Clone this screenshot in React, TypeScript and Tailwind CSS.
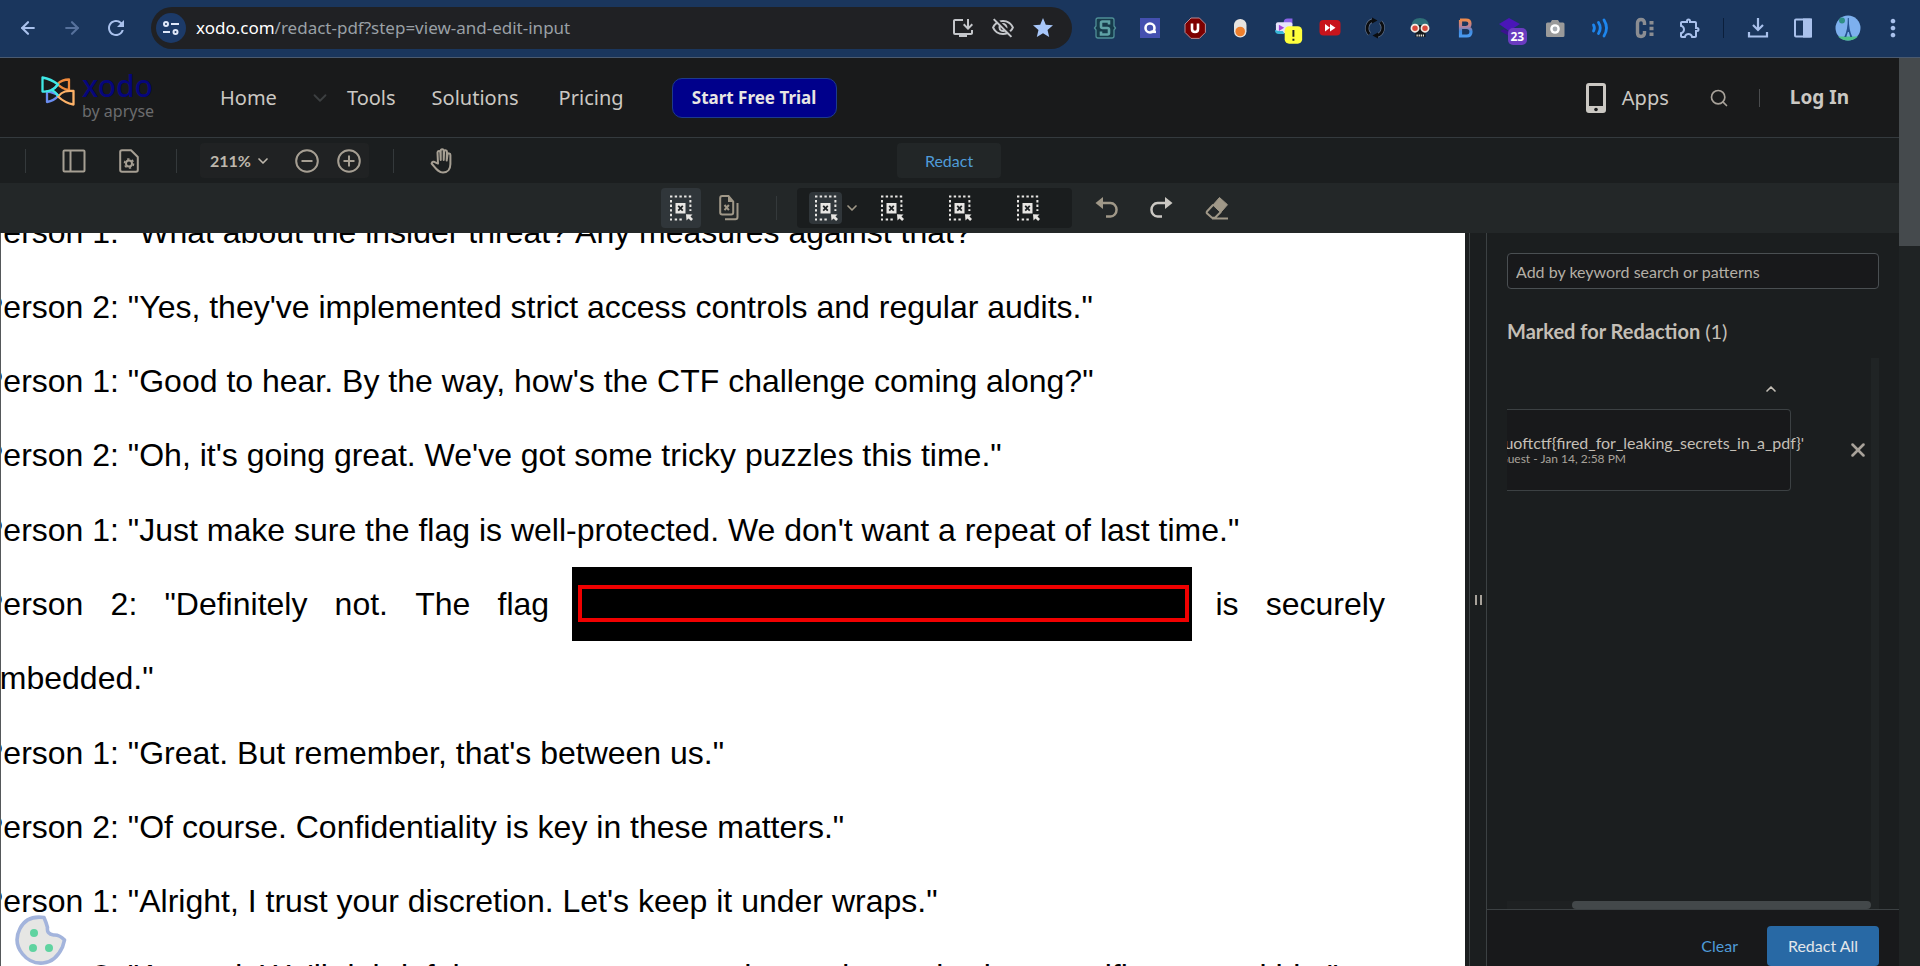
import React from "react";
import {
  ArrowLeft,
  ArrowRight,
  ChevronDown,
  ChevronUp,
  Search,
  X,
} from "lucide-react";
import {
  MdOutlineInstallDesktop,
  MdOutlineVisibilityOff,
  MdStar,
  MdRefresh,
  MdOutlineExtension,
  MdMoreVert,
} from "react-icons/md";

type IconProps = { className?: string };

function RedactAreaIcon({ className = "" }: IconProps) {
  return (
    <svg viewBox="0 0 24 26" className={`h-[26px] w-6 ${className}`} fill="none" aria-hidden="true">
      <path d="M1 1.5H22.4" stroke="currentColor" strokeWidth="2" strokeDasharray="2.4 2.3" />
      <path d="M2 5V25.4" stroke="currentColor" strokeWidth="2" strokeDasharray="2.4 2.2" />
      <path d="M21.4 5V16" stroke="currentColor" strokeWidth="2" strokeDasharray="2.4 2.2" />
      <path d="M5.7 24.4H14" stroke="currentColor" strokeWidth="2" strokeDasharray="2.4 2.3" />
      <rect x="6.5" y="8" width="10" height="10.5" fill="currentColor" />
      <path d="M9.2 10.8l4.6 4.9M13.8 10.8L9.2 15.7" stroke="#1f2325" strokeWidth="1.8" />
      <path d="M17 19.2l6.5.3-2 2 2.5 2.6-1.9 1.9-2.6-2.6-2 2z" fill="currentColor" />
    </svg>
  );
}

function RedactPageIcon() {
  return (
    <svg viewBox="0 0 20 26" className="h-[26px] w-5" fill="none" stroke="currentColor" strokeWidth="2" aria-hidden="true">
      <path d="M9.5 1H3.2Q1.2 1 1.2 3v14.5q0 2 2 2h9q2 0 2-2V6.5z" />
      <path d="M9 1l5.5 6H9z" fill="currentColor" stroke="none" />
      <path d="M5.5 10l4.4 5.2M9.9 10l-4.4 5.2" />
      <path d="M18.5 8v14q0 2.2-2.2 2.2H6" />
    </svg>
  );
}

function UndoIcon({ className = "" }: IconProps) {
  return (
    <svg viewBox="0 0 24 24" className={`h-6 w-6 ${className}`} fill="none" aria-hidden="true">
      <path d="M6 7h9.5a6 6.7 0 0 1 0 13.5H11" stroke="currentColor" strokeWidth="2.5" />
      <path d="M8 1v12L.5 7z" fill="currentColor" />
    </svg>
  );
}

function EraserIcon() {
  return (
    <svg viewBox="0 0 24 24" className="h-6 w-6" fill="none" aria-hidden="true">
      <path d="M14.5 1.5l8 7.2-6.8 7.8-7.8-7.4z" fill="currentColor" stroke="currentColor" strokeLinejoin="round" />
      <path d="M8.2 8.7l-6 6.5q-1 1.2 0 2.3l4.8 4.3h3l6-6M7 22.5H23" stroke="currentColor" strokeWidth="2" />
    </svg>
  );
}

function PanelIcon() {
  return (
    <svg viewBox="0 0 24 24" className="h-6 w-6" fill="none" stroke="currentColor" strokeWidth="2" aria-hidden="true">
      <rect x="1.5" y="1.5" width="21" height="21" rx="1" />
      <path d="M8.5 1.5v21" />
    </svg>
  );
}

function FileGearIcon() {
  return (
    <svg viewBox="0 0 20 24" className="h-6 w-5" fill="none" stroke="currentColor" strokeWidth="2" aria-hidden="true">
      <path d="M12 1.2H3q-1.8 0-1.8 1.8v18q0 1.8 1.8 1.8h14q1.8 0 1.8-1.8V8z" strokeLinejoin="round" />
      <circle cx="10" cy="14.5" r="3" />
      <circle cx="10" cy="14.5" r="4.6" strokeWidth="1.5" strokeDasharray="2.4 2.4" />
    </svg>
  );
}

function ZoomIcon({ plus = false }: { plus?: boolean }) {
  return (
    <svg viewBox="0 0 24 24" className="h-6 w-6" fill="none" stroke="currentColor" strokeWidth="2" aria-hidden="true">
      <circle cx="12" cy="12" r="10.8" />
      <path d="M6.5 12h11" />
      {plus && <path d="M12 6.5v11" />}
    </svg>
  );
}

function HandIcon() {
  return (
    <svg viewBox="0 0 24 26" className="h-[26px] w-6" fill="none" stroke="currentColor" strokeWidth="2" strokeLinecap="round" strokeLinejoin="round" aria-hidden="true">
      <path d="M8 15.5L7.5 4.5c0-2 2.6-2 2.8-.2l.4 7.7V2.8c0-2 3-2 3 0V12l.4-8.6c.2-1.8 2.8-1.6 2.8.2L16.7 12.5l.8-6c.4-1.7 3-1.4 2.9.4V16c0 5-2.6 8.5-7.4 8.5-5 0-7-4-11.4-9 .5-1.9 2.4-2.2 3.6-1.2z" />
    </svg>
  );
}

function XodoMark() {
  return (
    <svg viewBox="0 0 34 30" className="h-[30px] w-[34px]" fill="none" strokeWidth="2.3" strokeLinejoin="round" aria-hidden="true">
      <path d="M6 15.5V26q7-1 11.5-6.5Q14 16.5 6 15.5z" stroke="#6a8df0" />
      <path d="M28 3.5V14q-7-1-11.5-6Q21 3.500 28 3.500z" stroke="#f08a3c" />
      <path d="M10.5 14q4-2 6.5-6" stroke="#6a8df0" />
      <path d="M1.5 1.5v14q5 .5 9-1.5t6.5-5.500Q10 3 1.500 1.500z" stroke="#3fe8e6" />
      <path d="M32.5 15v13.5Q24 27 17 20.5q3.5-4 7-5t8.500-.5z" stroke="#fdb268" />
      <path d="M10.5 14q4 1.5 6.500 6" stroke="#3fe8e6" />
    </svg>
  );
}

const extClass = "h-6 w-7";

const extensions: { name: string; icon: React.ReactNode }[] = [
  {
    name: "Snippets",
    icon: (
      <svg viewBox="0 0 28 24" className={extClass}>
        <path d="M7 2h14q2 0 2 2v6l1.500 2-1.500 2v6q0 2-2 2H7q-2 0-2-2v-6l-1.500-2L5 10V4q0-2 2-2z" fill="#173b4b" stroke="#4f8f96" strokeWidth="1.3" />
        <path d="M18 8.500V5.500h-6.500q-1.500 0-1.500 1.500v3.500q0 1.500 1.500 1.500h5q1.500 0 1.500 1.500V17q0 1.500-1.500 1.500H10v-3" stroke="#5fa3a6" strokeWidth="2.6" fill="none" />
      </svg>
    ),
  },
  {
    name: "Quick search",
    icon: (
      <svg viewBox="0 0 28 24" className={extClass}>
        <rect x="4" y="2" width="20" height="20" fill="#4450b0" />
        <circle cx="14" cy="12" r="4.5" fill="none" stroke="#fff" strokeWidth="2.6" />
        <path d="M14.500 15.800h5.500" stroke="#fff" strokeWidth="2.6" />
      </svg>
    ),
  },
  {
    name: "Content blocker",
    icon: (
      <svg viewBox="0 0 28 24" className={extClass}>
        <path d="M10 2h8.400l6 6v8.400l-6 6H10l-6-6V8z" fill="#7d0000" stroke="#b98a92" strokeWidth="1" />
        <path d="M11 7.500v5.500q0 3 3 3t3-3V7.500" fill="none" stroke="#fff" strokeWidth="2.6" />
      </svg>
    ),
  },
  {
    name: "Toggle",
    icon: (
      <svg viewBox="0 0 28 24" className={extClass}>
        <rect x="8" y="3" width="12.5" height="18.5" rx="6.2" fill="#e8e4e0" />
        <circle cx="14.2" cy="15.5" r="4.8" fill="#ee7f2c" />
      </svg>
    ),
  },
  {
    name: "Stream tools",
    icon: (
      <svg viewBox="0 0 34 34" className="-mb-2 ml-3 h-[34px] w-[34px]">
        <path d="M10 7q0-4 4-4h5v6h-9z" fill="#8a63e8" />
        <rect x="2" y="7" width="17" height="11" rx="2" fill="#e7e4fb" />
        <path d="M1 15q0 4 4 4h6l-2-3H5z" fill="#38b6d8" />
        <path d="M5 9.500l5.500 3-5.500 3.500z" fill="#a442d8" />
        <rect x="11" y="11" width="18" height="18" rx="4.5" fill="#ffff3c" />
        <path d="M20 15v7M20 24v2" stroke="#222" strokeWidth="2" />
      </svg>
    ),
  },
  {
    name: "Speed control",
    icon: (
      <svg viewBox="0 0 28 24" className={extClass}>
        <rect x="3.5" y="4" width="21" height="15.5" rx="4" fill="#c8141c" />
        <path d="M9 8l5 3.700-5 3.700zM14 8l5.500 3.700-5.500 3.700z" fill="#fff" />
      </svg>
    ),
  },
  {
    name: "Sync",
    icon: (
      <svg viewBox="0 0 28 24" className={extClass} fill="none">
        <path d="M16.500 19.500a7.500 8 0 0 0 3-13.500M11.500 4.500a7.500 8 0 0 0-3 13.500" stroke="#66758c" strokeWidth="4" />
        <path d="M16.500 19.500a7.500 8 0 0 0 3-13.500M11.500 4.500a7.500 8 0 0 0-3 13.500" stroke="#0b0d10" strokeWidth="2.8" />
        <path d="M11 1.500l5.500 3-5.500 3zM17 16.500l-5.500 3 5.500 3z" fill="#0b0d10" />
      </svg>
    ),
  },
  {
    name: "Skull",
    icon: (
      <svg viewBox="0 0 28 24" className={extClass}>
        <path d="M6 9q1-6.500 8-6.500T22.500 9l1 6-4 1v5h-10v-5l-5-1z" fill="#15191c" />
        <path d="M5.500 9q1-7 8.500-7t9 7z" fill="#2e6f78" />
        <circle cx="9" cy="12.2" r="3.6" fill="#d84a3a" stroke="#f3ece4" strokeWidth="1.7" />
        <circle cx="19" cy="12.2" r="3.6" fill="#d84a3a" stroke="#f3ece4" strokeWidth="1.7" />
        <path d="M10.500 19.500h7.500" stroke="#e8e4dc" strokeWidth="1.8" strokeDasharray="1.3 .8" />
      </svg>
    ),
  },
  {
    name: "Bold",
    icon: (
      <svg viewBox="0 0 28 24" className={extClass} fill="none">
        <defs>
          <linearGradient id="boldTint" x1="0" y1="0" x2="0" y2="1">
            <stop offset="0" stopColor="#ee8a4c" />
            <stop offset=".4" stopColor="#b98098" />
            <stop offset=".7" stopColor="#3f8be0" />
            <stop offset="1" stopColor="#4a9af0" />
          </linearGradient>
        </defs>
        <path d="M9 4h6q4 0 4 3.700T15 11.500h-5.500H15.500q4.500 0 4.500 4.300T15.500 20H9.500V4" stroke="url(#boldTint)" strokeWidth="3.2" />
      </svg>
    ),
  },
  {
    name: "Layers",
    icon: (
      <span className="relative flex">
        <svg viewBox="0 0 28 24" className={extClass}>
          <path d="M3 8l10-6 11 6-11 7z" fill="#4a16b8" />
          <path d="M4 15l4-2 6 3.500v4z" fill="#3a1290" />
        </svg>
        <span className="absolute top-3 left-3 rounded-[5px] bg-[#6a3cc0] px-[3px] font-['Open_Sans',sans-serif] text-[12px] leading-[17px] font-bold text-white">
          23
        </span>
      </span>
    ),
  },
  {
    name: "Screenshot",
    icon: (
      <svg viewBox="0 0 28 24" className={extClass}>
        <path d="M11 4h6l1.500 2.500H22q1.500 0 1.500 1.500v11.500q0 1.500-1.500 1.500H6.500Q5 21 5 19.500V8q0-1.500 1.500-1.500h3z" fill="#9a9a9a" />
        <circle cx="14" cy="13" r="4.8" fill="#fff" />
        <circle cx="14" cy="13" r="2.4" fill="#a8adb3" />
      </svg>
    ),
  },
  {
    name: "Read aloud",
    icon: (
      <svg viewBox="0 0 28 24" className={extClass} fill="none" stroke="#1d86ee" strokeWidth="2.8" strokeLinecap="round">
        <path d="M7.500 9q1.800 3 0 6M12.500 6.500q3.500 5.500 0 11M18 4q5 8 0 16" />
      </svg>
    ),
  },
  {
    name: "Colon",
    icon: (
      <svg viewBox="0 0 28 24" className={extClass} fill="none">
        <path d="M13.500 9V7q0-3.500-3.500-3.500T6.500 7v10q0 3.500 3.500 3.500t3.500-3.500v-2" stroke="#8b8d92" strokeWidth="3.4" />
        <path d="M20.500 5v15" stroke="#8b8d92" strokeWidth="4" strokeDasharray="3.4 2.4" />
      </svg>
    ),
  },
];

const documentLines = [
  `Person 1: "What about the insider threat? Any measures against that?"`,
  `Person 2: "Yes, they've implemented strict access controls and regular audits."`,
  `Person 1: "Good to hear. By the way, how's the CTF challenge coming along?"`,
  `Person 2: "Oh, it's going great. We've got some tricky puzzles this time."`,
  `Person 1: "Just make sure the flag is well-protected. We don't want a repeat of last time."`,
  null,
  `embedded."`,
  `Person 1: "Great. But remember, that's between us."`,
  `Person 2: "Of course. Confidentiality is key in these matters."`,
  `Person 1: "Alright, I trust your discretion. Let's keep it under wraps."`,
  `Person 2: "Agreed. We'll debrief the team on some enhanced security, but specifics stay within."`,
];

function ChromeBar() {
  return (
    <header className="flex h-[58px] shrink-0 items-center border-b border-[#4a5a70] bg-[#1a365d] pb-[2px] text-[#a9c1ec]">
      <div className="flex w-[151px] shrink-0 items-center gap-5 pl-4">
        <button aria-label="Back"><ArrowLeft className="h-5 w-6" strokeWidth={2.6} /></button>
        <button aria-label="Forward" className="text-[#56719c]"><ArrowRight className="h-5 w-6" strokeWidth={2.6} /></button>
        <button aria-label="Reload"><MdRefresh className="h-6 w-6" /></button>
      </div>
      <div className="flex h-[42px] min-w-0 flex-1 items-center rounded-full bg-[#202124] pr-[17px] pl-[5px] text-[#c4c6ca]">
        <button aria-label="Site settings" className="flex h-[30px] w-[30px] items-center justify-center rounded-full bg-[#1c3a68]">
          <svg viewBox="0 0 16 16" className="h-4 w-4" fill="none" stroke="#dfe8fa" strokeWidth="2">
            <circle cx="3" cy="4" r="2" />
            <path d="M8 4h8M0 12h7" />
            <circle cx="12.5" cy="12" r="2" />
          </svg>
        </button>
        <div role="textbox" aria-label="Address" className="flex-1 pl-[10px] font-['Noto_Sans',sans-serif] text-[17px] whitespace-nowrap text-[#9aa0a6]">
          <span className="text-white">xodo.com</span>/redact-pdf?step=view-and-edit-input
        </div>
        <div className="flex items-center gap-4">
          <button aria-label="Install"><MdOutlineInstallDesktop className="h-6 w-6" /></button>
          <button aria-label="Tracking"><MdOutlineVisibilityOff className="h-6 w-6" /></button>
          <button aria-label="Bookmark" className="text-[#a8c7fa]"><MdStar className="h-6 w-6" /></button>
        </div>
      </div>
      <div className="flex shrink-0 items-center pr-[5px] pl-[10px]">
        {extensions.map((ext) => (
          <button key={ext.name} aria-label={ext.name} className="flex w-[45px] items-center justify-center">
            {ext.icon}
          </button>
        ))}
        <button aria-label="Extensions" className="flex w-[45px] justify-center"><MdOutlineExtension className="h-6 w-6" /></button>
        <span className="mx-[11px] h-5 w-px bg-[#0b1f3c]" />
        <button aria-label="Downloads" className="flex w-[45px] justify-center">
          <svg viewBox="0 0 22 22" className="h-[22px] w-[22px]" fill="none" stroke="currentColor" strokeWidth="2.2">
            <path d="M11 1v12M6 8l5 5 5-5M2 15v4.500h18V15" />
          </svg>
        </button>
        <button aria-label="Side panel" className="flex w-[45px] justify-center">
          <svg viewBox="0 0 20 20" className="h-5 w-5" fill="none" stroke="currentColor" strokeWidth="2">
            <rect x="2" y="1.5" width="16" height="17" rx="1" />
            <path d="M11 1.500h7v17h-7z" fill="currentColor" />
          </svg>
        </button>
        <button aria-label="Profile" className="flex w-[45px] justify-center">
          <svg viewBox="0 0 26 26" className="h-[26px] w-[26px]">
            <circle cx="13" cy="13" r="12.5" fill="#7db0ee" />
            <path d="M3 21.500h20q-4 4-10 4t-10-4z" fill="#4fc08a" />
            <path d="M12.800 3q0 12-3.500 19h2l1.500-5h1l1.500 5h2q-3.500-7-3.500-19z" fill="#24508f" />
            <circle cx="7" cy="5.5" r="3" fill="#2f8f86" />
          </svg>
        </button>
        <button aria-label="Menu" className="flex w-[45px] justify-center"><MdMoreVert className="h-7 w-7" /></button>
      </div>
    </header>
  );
}

function SiteNav() {
  return (
    <nav className="flex h-20 shrink-0 items-center border-b border-[#343a3e] bg-[#191a1b] font-['Noto_Sans',sans-serif] text-[20px] text-[#cbc8c3]">
      <a href="#home" className="flex w-[179px] shrink-0 items-start pl-[41px]">
        <XodoMark />
        <span className="flex flex-col pl-[7px]">
          <span className="-mt-[7px] text-[30px] leading-[34px] font-medium text-[#06067c]">xodo</span>
          <span className="text-[16px] leading-4 text-[#6b6c6e]">by apryse</span>
        </span>
      </a>
      <a href="#home" className="ml-[41px]">Home</a>
      <ChevronDown size={22} className="mr-4 ml-8 text-[#3c3f41]" />
      <a href="#tools">Tools</a>
      <a href="#solutions" className="ml-9">Solutions</a>
      <a href="#pricing" className="ml-10">Pricing</a>
      <button className="ml-12 h-10 w-[165px] rounded-[10px] border border-[#1d3a8c] bg-[#00008b] text-[17px] font-bold text-[#e8e6e3]">
        Start Free Trial
      </button>
      <div className="ml-auto flex items-center pr-[50px]">
        <svg viewBox="0 0 20 30" className="h-[30px] w-5" aria-hidden="true">
          <path d="M3 0h14q3 0 3 3v24q0 3-3 3H3q-3 0-3-3V3q0-3 3-3zM3 3v20h14V3z" fill="#cbc8c3" fillRule="evenodd" />
          <circle cx="10" cy="26.5" r="1.8" fill="#191a1b" />
        </svg>
        <a href="#apps" className="ml-4">Apps</a>
        <button aria-label="Search" className="ml-10 text-[#a8a29a]"><Search size={20} /></button>
        <span className="ml-[30px] h-[18px] w-px bg-[#4a4c4e]" />
        <a href="#login" className="ml-[30px] text-[19px] font-bold">Log In</a>
      </div>
    </nav>
  );
}

function Divider() {
  return <span className="h-6 w-px bg-[#34393b]" />;
}

function ViewerToolbar() {
  return (
    <div className="flex h-[45px] shrink-0 items-center bg-[#1b1e1f] pr-[26px] font-['Lato',sans-serif] text-[16px] text-[#a69f93]">
      <div className="flex flex-1 items-center pl-[25px]">
        <Divider />
        <button aria-label="Toggle panel" className="ml-9"><PanelIcon /></button>
        <button aria-label="Document settings" className="ml-[33px]"><FileGearIcon /></button>
        <span className="ml-[37px] flex"><Divider /></span>
        <div className="ml-[23px] flex h-[35px] items-center rounded bg-[#202223] pr-2 pl-[10px]">
          <button className="flex items-center gap-1 font-bold text-[#bdb7ac]">
            211% <ChevronDown size={16} strokeWidth={2.5} />
          </button>
          <button aria-label="Zoom out" className="ml-6"><ZoomIcon /></button>
          <button aria-label="Zoom in" className="ml-[18px]"><ZoomIcon plus /></button>
        </div>
        <span className="ml-6 flex"><Divider /></span>
        <button aria-label="Pan" className="ml-9"><HandIcon /></button>
      </div>
      <button className="h-[35px] w-[104px] rounded bg-[#222627] text-[#4f9bd8]">Redact</button>
      <div className="flex-1" />
    </div>
  );
}

function RedactToolbar() {
  return (
    <div className="flex h-[50px] shrink-0 items-center justify-center bg-[#232728] pr-[9px] text-[#e8e6e3]">
      <button aria-label="Mark area" className="flex h-10 w-10 items-center justify-center rounded bg-[#30363a]"><RedactAreaIcon /></button>
      <button aria-label="Mark pages" className="ml-[18px] text-[#a09888]"><RedactPageIcon /></button>
      <span className="ml-[37px] flex"><Divider /></span>
      <div className="ml-5 flex h-10 w-[275px] items-center rounded bg-[#1a1d1e] pl-3">
        <button aria-label="Style 1" className="flex h-8 w-[33px] items-center justify-center rounded bg-[#30363a]"><RedactAreaIcon /></button>
        <button aria-label="More styles" className="ml-[2px] text-[#a09888]"><ChevronDown size={16} strokeWidth={2.5} /></button>
        <button aria-label="Style 2" className="ml-5"><RedactAreaIcon /></button>
        <button aria-label="Style 3" className="ml-11"><RedactAreaIcon /></button>
        <button aria-label="Style 4" className="ml-11"><RedactAreaIcon /></button>
      </div>
      <button aria-label="Undo" className="ml-[23px] text-[#a09888]"><UndoIcon /></button>
      <button aria-label="Redo" className="ml-[30px] text-[#cbc8c3]"><UndoIcon className="-scale-x-100" /></button>
      <button aria-label="Erase" className="ml-8 text-[#a09888]"><EraserIcon /></button>
    </div>
  );
}

function DocumentView() {
  return (
    <main className="relative min-w-0 flex-1 overflow-hidden border-l border-[#55585a] bg-white">
      <div className="-mt-[38px] -ml-[19px] grid h-[818px] grid-rows-11 font-['Liberation_Sans',Arial,sans-serif] text-[32px] leading-none whitespace-nowrap text-black">
        {documentLines.map((line, i) =>
          line === null ? (
            <p key={i} className="flex items-center justify-between pr-20">
              <span>Person</span>
              <span>2:</span>
              <span>"Definitely</span>
              <span>not.</span>
              <span>The</span>
              <span>flag</span>
              <span className="-mx-1 flex h-full w-[620px] items-start bg-black pt-[18px] pr-[3px] pl-[6px]">
                <span className="h-[37px] w-full border-4 border-[#f00000]" />
              </span>
              <span>is</span>
              <span>securely</span>
            </p>
          ) : (
            <p key={i} className="flex items-center">{line}</p>
          )
        )}
      </div>
      <button aria-label="Cookie preferences" className="absolute bottom-0 left-[14px]">
        <svg viewBox="0 0 52 52" className="h-[52px] w-[52px]">
          <path d="M29 3.500Q12 1 5 14.500T7.500 40q8 10 20.500 9T47.500 33l2-7q-5-5.500-11-5-7-1-6-7.500Q31 8 29 3.500z" fill="#e6e6e4" stroke="#a3b4dc" strokeWidth="3.6" strokeLinejoin="round" />
          <circle cx="19" cy="19" r="4" fill="#5fd3a0" />
          <circle cx="18" cy="34" r="4" fill="#5fd3a0" />
          <circle cx="34" cy="34" r="4" fill="#5fd3a0" />
        </svg>
      </button>
    </main>
  );
}

function RedactionPanel() {
  return (
    <aside className="flex w-[413px] shrink-0 flex-col border-l border-[#3c4143] bg-[#1b1e1f] font-['Lato',sans-serif] text-[#c4bfb6]">
      <div className="flex min-h-0 flex-1 flex-col px-5">
        <input
          aria-label="Add by keyword search or patterns"
          placeholder="Add by keyword search or patterns"
          className="mt-5 h-9 w-full shrink-0 rounded border border-[#4a4f52] bg-[#18191b] px-2 text-[16px] placeholder:text-[#b4afa6]"
        />
        <h2 className="mt-7 text-[20px] leading-7 font-bold">
          Marked for Redaction <span className="font-normal">(1)</span>
        </h2>
        <div className="mt-[13px] flex min-h-0 flex-1 overflow-hidden">
          <div className="flex min-w-0 flex-1 flex-col">
            <div className="flex h-[51px] items-center justify-end pt-[10px] pr-[92px]">
              <button aria-label="Collapse"><ChevronUp size={16} strokeWidth={2.5} /></button>
            </div>
            <div className="flex items-center justify-between">
              <div className="flex h-[82px] w-[284px] flex-col items-start justify-center rounded-r border border-l-0 border-[#3c4143] bg-[#18191b] whitespace-nowrap">
                <div className="flex w-[297px] justify-end overflow-hidden text-[16px] leading-[18px]">
                  <span>'uoftctf&#123;fired_for_leaking_secrets_in_a_pdf&#125;'</span>
                </div>
                <div className="flex w-[119px] justify-end overflow-hidden text-[12px] leading-[14px] text-[#a8a29a]">
                  <span>Guest - Jan 14, 2:58 PM</span>
                </div>
              </div>
              <button aria-label="Remove mark" className="mr-[2px] text-[#a8a29a]"><X size={22} strokeWidth={2.8} /></button>
            </div>
            <div className="mt-auto flex h-2 justify-end bg-[#1e2122]">
              <span className="h-full w-[299px] rounded-full bg-[#43484a]" />
            </div>
          </div>
          <div className="w-2 bg-[#202425]" />
        </div>
      </div>
      <footer className="flex h-[57px] shrink-0 items-end justify-end gap-[29px] border-t border-[#3c4143] bg-[#18191b] pr-5 text-[16px]">
        <button className="h-10 text-[#4f9bd8]">Clear</button>
        <button className="h-10 w-28 rounded bg-[#2869a5] text-[#e2e6ea]">Redact All</button>
      </footer>
    </aside>
  );
}

export default function App() {
  return (
    <div className="flex h-screen flex-col overflow-hidden bg-[#1b1e1f]">
      <ChromeBar />
      <div className="flex min-h-0 flex-1">
        <div className="flex min-w-0 flex-1 flex-col">
          <SiteNav />
          <ViewerToolbar />
          <RedactToolbar />
          <div className="flex min-h-0 flex-1">
            <DocumentView />
            <div className="w-1 bg-[#1b1e1f]" />
            <div className="flex w-[17px] items-center justify-center gap-[3px] border-l border-[#3c4143]">
              <span className="h-[10px] w-[2px] bg-[#a8a29a]" />
              <span className="h-[10px] w-[2px] bg-[#a8a29a]" />
            </div>
            <RedactionPanel />
          </div>
        </div>
        <div className="w-[21px] shrink-0 bg-[#1f2324]">
          <div className="h-[188px] bg-[#454a4d]" />
        </div>
      </div>
    </div>
  );
}
